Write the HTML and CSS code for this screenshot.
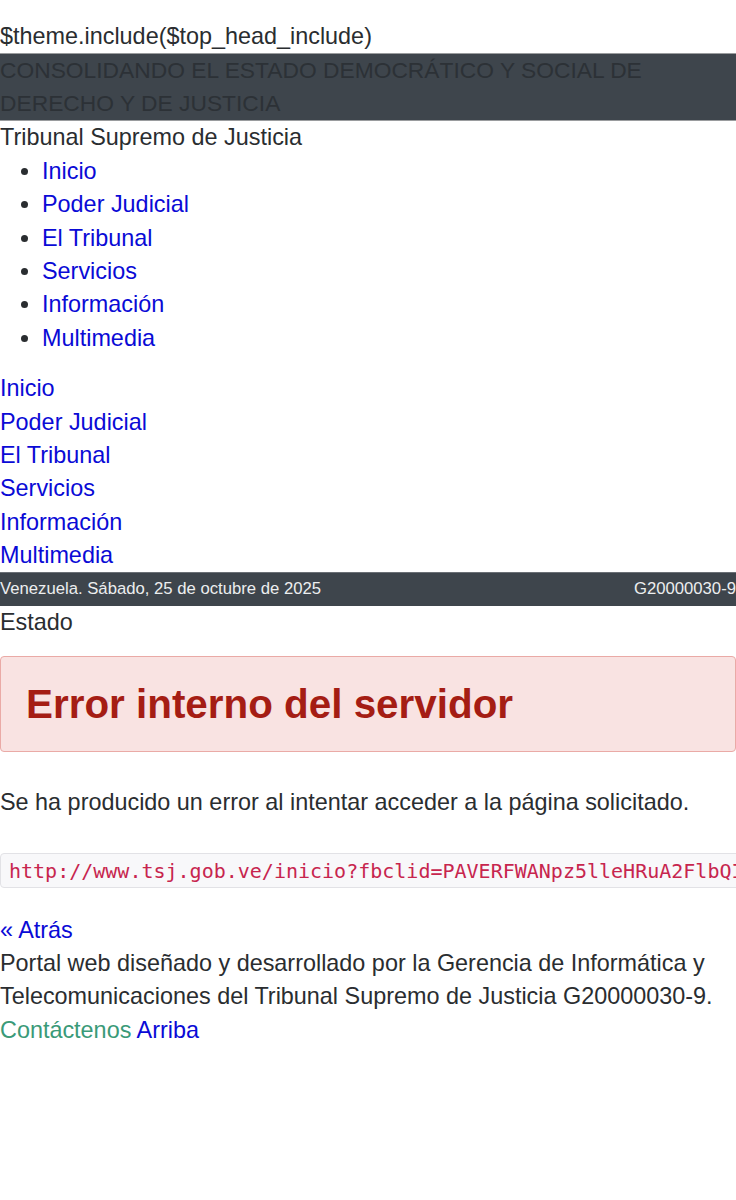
FILE: index.html
```html
<!DOCTYPE html>
<html lang="es">
<head>
    <meta charset="UTF-8">
    <meta name="viewport" content="width=device-width, initial-scale=1.0">
    <title>Error interno del servidor</title>
    <link rel="stylesheet" href="styles.css">
</head>
<body>
    <div class="top-include">$theme.include($top_head_include)</div>

    <div class="slogan">CONSOLIDANDO EL ESTADO DEMOCRÁTICO Y SOCIAL DE DERECHO Y DE JUSTICIA</div>

    <div class="site-name">Tribunal Supremo de Justicia</div>

    <ul class="main-menu">
        <li><a href="#">Inicio</a></li>
        <li><a href="#">Poder Judicial</a></li>
        <li><a href="#">El Tribunal</a></li>
        <li><a href="#">Servicios</a></li>
        <li><a href="#">Información</a></li>
        <li><a href="#">Multimedia</a></li>
    </ul>

    <div class="mobile-menu">
        <a href="#">Inicio</a>
        <a href="#">Poder Judicial</a>
        <a href="#">El Tribunal</a>
        <a href="#">Servicios</a>
        <a href="#">Información</a>
        <a href="#">Multimedia</a>
    </div>

    <div class="date-bar">
        <span>Venezuela. Sábado, 25 de octubre de 2025</span>
        <span>G20000030-9</span>
    </div>

    <div class="state">Estado</div>

    <div class="alert">
        <h3>Error interno del servidor</h3>
    </div>

    <p class="message">Se ha producido un error al intentar acceder a la página solicitado.</p>

    <div class="url-box"><code>http://www.tsj.gob.ve/inicio?fbclid=PAVERFWANpz5lleHRuA2FlbQIxMQABp</code></div>

    <a class="back" href="#">« Atrás</a>

    <footer class="footer">
        <div>Portal web diseñado y desarrollado por la Gerencia de Informática y Telecomunicaciones del Tribunal Supremo de Justicia G20000030-9.</div>
        <a class="contact" href="#">Contáctenos</a> <a href="#">Arriba</a>
    </footer>
</body>
</html>
```

FILE: styles.css
```css
* {
    box-sizing: border-box;
}

html {
    overflow-x: hidden;
}

body {
    margin: 0;
    padding-top: 20px;
    font-family: "Liberation Sans", Arial, sans-serif;
    font-size: 23.4px;
    line-height: 33.4px;
    color: #2a2d30;
    background-color: #FFFFFF;
    overflow-x: hidden;
}

a {
    color: #0a0ad6;
    text-decoration: none;
}

.slogan {
    background-color: #3e454c;
    color: #2c3136;
    font-size: 22.8px;
    line-height: 33px;
    border-top: 1px solid #9a9c9e;
    border-bottom: 1px solid #9a9c9e;
    padding-right: 80px;
}

.main-menu {
    margin: 0 0 17px 0;
    padding-left: 42px;
}

.mobile-menu {
    margin-bottom: -1px;
}

.mobile-menu a {
    display: block;
}

.date-bar {
    display: flex;
    justify-content: space-between;
    align-items: center;
    background-color: #3e454c;
    color: #eceeef;
    font-size: 16.7px;
    height: 34px;
    border-top: 1px solid #6b7076;
}

.alert {
    margin: 17px 0 0 0;
    padding: 13px 25px;
    background-color: #f9e3e2;
    border: 1px solid #eaaaa6;
    border-radius: 4px;
}

.alert h3 {
    margin: 0;
    color: #a51d14;
    font-size: 40.4px;
    line-height: 68px;
    font-weight: bold;
}

.message {
    margin: 34px 0 33px 0;
}

.url-box {
    height: 35px;
    width: 760px;
    padding: 0 8px;
    background-color: #f8f8fa;
    border: 1px solid #e2e2e6;
    border-radius: 4px;
    white-space: nowrap;
    overflow: hidden;
}

.url-box code {
    font-family: "DejaVu Sans Mono", "Liberation Mono", monospace;
    font-size: 20px;
    line-height: 33px;
    color: #c7254e;
}

.back {
    display: block;
    margin-top: 26px;
}

.contact {
    color: #3a9a78;
}
```
